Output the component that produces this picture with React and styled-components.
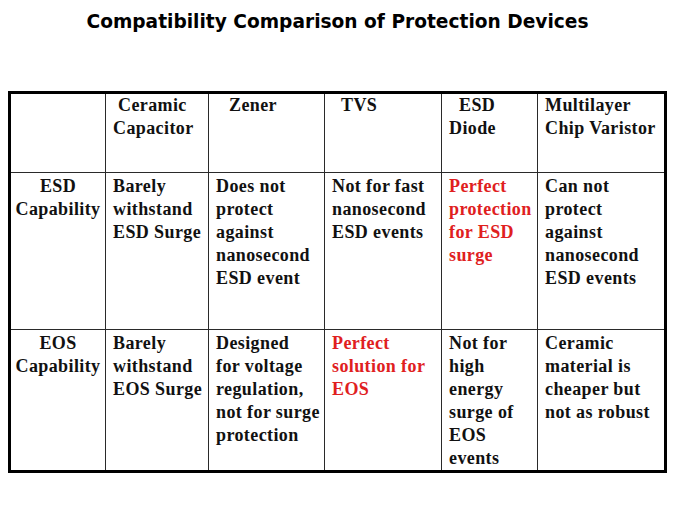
import React from "react";
import styled, { createGlobalStyle } from "styled-components";

const Global = createGlobalStyle`
  html, body { margin: 0; padding: 0; background: #fff; }
  #root { width: 675px; height: 506px; }
`;

const Page = styled.div`
  width: 675px;
  height: 506px;
  display: flex;
  flex-direction: column;
  padding: 0 8px;
  box-sizing: border-box;
`;

const Title = styled.h1`
  margin: 0;
  height: 91px;
  padding-top: 9px;
  box-sizing: border-box;
  text-align: center;
  font-family: "DejaVu Sans", Verdana, sans-serif;
  font-weight: bold;
  font-size: 18.6px;
  line-height: 26px;
  color: #000;
`;

const Grid = styled.div`
  display: grid;
  grid-template-columns: 94px 102px 115px 116px 95px 126px;
  grid-template-rows: 78px 156px 140px;
  gap: 1px;
  background: #2a2a2a;
  border: 3px solid #000;
  width: max-content;
`;

const Cell = styled.div`
  background: #fff;
  padding: ${(p) => p.$top}px 4px 0 7px;
  text-align: ${(p) => (p.$center ? "center" : "left")};
  font-family: "Liberation Serif", "Times New Roman", serif;
  font-weight: bold;
  font-size: 18px;
  line-height: 23px;
  letter-spacing: 0.4px;
  color: ${(p) => (p.$red ? "#e0201e" : "#111")};
  ${(p) => p.$center && "padding-left: 0; padding-right: 0;"}
`;

const Line = styled.div`
  white-space: nowrap;
  padding-left: ${(p) => p.$indent || 0}px;
`;

const header = [
  { lines: [] },
  { lines: [["Ceramic", 5], ["Capacitor", 0]] },
  { lines: [["Zener", 13]] },
  { lines: [["TVS", 9]] },
  { lines: [["ESD", 10], ["Diode", 0]] },
  { lines: [["Multilayer", 0], ["Chip Varistor", 0]] },
];

const rows = [
  [
    { lines: ["ESD", "Capability"], center: true },
    { lines: ["Barely", "withstand", "ESD Surge"] },
    { lines: ["Does not", "protect", "against", "nanosecond", "ESD event"] },
    { lines: ["Not for fast", "nanosecond", "ESD events"] },
    { lines: ["Perfect", "protection", "for ESD", "surge"], red: true },
    { lines: ["Can not", "protect", "against", "nanosecond", "ESD events"] },
  ],
  [
    { lines: ["EOS", "Capability"], center: true },
    { lines: ["Barely", "withstand", "EOS Surge"] },
    { lines: ["Designed", "for voltage", "regulation,", "not for surge", "protection"] },
    { lines: ["Perfect", "solution for", "EOS"], red: true },
    { lines: ["Not for", "high", "energy", "surge of", "EOS", "events"] },
    { lines: ["Ceramic", "material is", "cheaper but", "not as robust"] },
  ],
];

export default function App() {
  return (
    <Page>
      <Global />
      <Title>Compatibility Comparison of Protection Devices</Title>
      <Grid>
        {header.map((c, i) => (
          <Cell key={"h" + i} $top={0}>
            {c.lines.map(([t, ind]) => (
              <Line key={t} $indent={ind}>
                {t}
              </Line>
            ))}
          </Cell>
        ))}
        {rows.map((r, ri) =>
          r.map((c, ci) => (
            <Cell key={ri + "-" + ci} $top={2} $center={c.center} $red={c.red}>
              {c.lines.map((t) => (
                <Line key={t}>{t}</Line>
              ))}
            </Cell>
          ))
        )}
      </Grid>
    </Page>
  );
}
